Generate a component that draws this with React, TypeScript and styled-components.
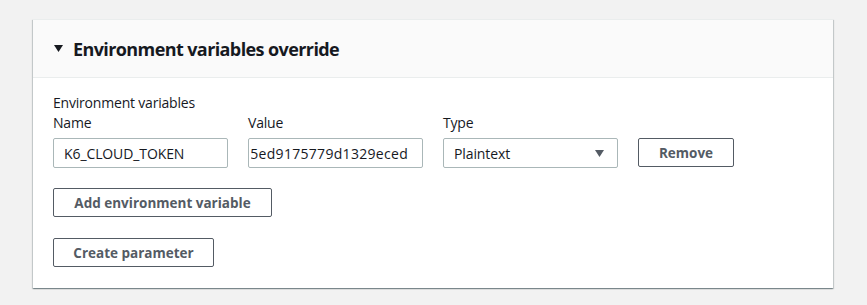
import React from "react";
import styled, { createGlobalStyle } from "styled-components";

const Global = createGlobalStyle`
  html, body { margin: 0; padding: 0; background: #f2f2f2; }
  body { font-family: "Open Sans", "Noto Sans", sans-serif; color: #16191f; }
  * { box-sizing: border-box; }
`;

const Page = styled.div`
  width: 867px;
  height: 305px;
  padding: 19px 34px 0 33px;
  background: #f2f2f2;
`;

const Card = styled.section`
  background: #fff;
  border-top: 1px solid #eaeded;
  box-shadow: 0 1px 1px 0 rgba(0, 28, 36, 0.3), 1px 1px 1px 0 rgba(0, 28, 36, 0.15),
    -1px 1px 1px 0 rgba(0, 28, 36, 0.15);
`;

const Header = styled.header`
  height: 58px;
  display: flex;
  align-items: center;
  gap: 10px;
  padding: 0 0 0 21px;
  background: #fafafa;
  border-bottom: 1px solid #eaeded;
`;

const Title = styled.h2`
  margin: 0;
  font-size: 18px;
  font-weight: 700;
  line-height: 22px;
  letter-spacing: -0.6px;
  color: #16191f;
`;

const Body = styled.div`
  padding: 15px 20px 21px 20px;
  display: flex;
  flex-direction: column;
  align-items: flex-start;
`;

const GroupLabel = styled.div`
  font-size: 14px;
  line-height: 20px;
  letter-spacing: -0.2px;
  color: #16191f;
`;

const Row = styled.div`
  display: flex;
  align-items: flex-end;
  gap: 20px;
`;

const Field = styled.div`
  display: flex;
  flex-direction: column;
  width: 175px;
`;

const FieldLabel = styled.div`
  font-size: 14px;
  line-height: 20px;
  letter-spacing: -0.2px;
  margin-bottom: 5px;
  color: #16191f;
`;

const InputBox = styled.div`
  height: 30px;
  border: 1px solid #aab7b8;
  border-radius: 2px;
  background: #fff;
  display: flex;
  align-items: center;
  padding: 0 10px;
  overflow: hidden;
  white-space: nowrap;
  font-size: 14px;
  letter-spacing: -0.1px;
  color: #16191f;
`;

const ValueBox = styled(InputBox)`
  padding: 0 14px 0 2px;
  letter-spacing: 0.3px;
`;

const Clip = styled.span`
  flex: 1;
  min-width: 0;
  overflow: hidden;
  display: flex;
  justify-content: flex-end;
`;

const SelectBox = styled(InputBox)`
  justify-content: space-between;
  padding: 0 13px 0 10px;
`;

const Button = styled.button<{ $width: number; $lift?: boolean }>`
  width: ${(p) => p.$width}px;
  height: 29px;
  margin-bottom: ${(p) => (p.$lift ? 1 : 0)}px;
  border: 1px solid #545b64;
  border-radius: 2px;
  background: #fff;
  color: #545b64;
  font-family: "Open Sans", "Noto Sans", sans-serif;
  font-weight: 700;
  font-size: 13.5px;
  padding: 0;
  display: flex;
  align-items: center;
  justify-content: center;
  cursor: pointer;
`;

const Spacer = styled.div<{ $h: number }>`
  height: ${(p) => p.$h}px;
`;

const Caret = ({ color }: { color: string }) => (
  <svg width="9" height="7" viewBox="0 0 9 7">
    <polygon points="0,0 9,0 4.5,7" fill={color} />
  </svg>
);

export default function App() {
  return (
    <>
      <Global />
      <Page>
        <Card>
          <Header>
            <Caret color="#16191f" />
            <Title>Environment variables override</Title>
          </Header>
          <Body>
            <GroupLabel>Environment variables</GroupLabel>
            <Row>
              <Field>
                <FieldLabel>Name</FieldLabel>
                <InputBox>K6_CLOUD_TOKEN</InputBox>
              </Field>
              <Field>
                <FieldLabel>Value</FieldLabel>
                <ValueBox>
                  <Clip>
                    <span>a3f8c21b7e45ed9175779d1329eced</span>
                  </Clip>
                </ValueBox>
              </Field>
              <Field>
                <FieldLabel>Type</FieldLabel>
                <SelectBox>
                  <span>Plaintext</span>
                  <Caret color="#545b64" />
                </SelectBox>
              </Field>
              <Button $width={96} $lift>Remove</Button>
            </Row>
            <Spacer $h={20} />
            <Button $width={219}>Add environment variable</Button>
            <Spacer $h={21} />
            <Button $width={161}>Create parameter</Button>
          </Body>
        </Card>
      </Page>
    </>
  );
}
